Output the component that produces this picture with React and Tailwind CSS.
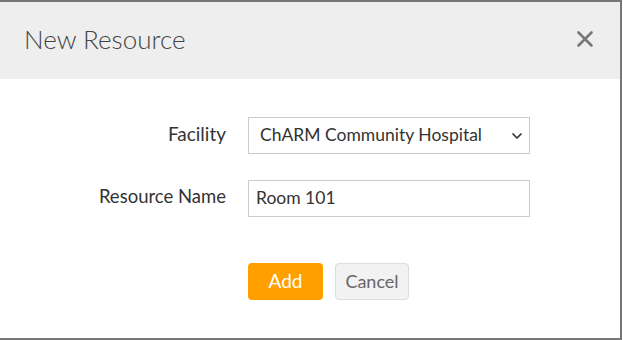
import React from 'react';
import { X, ChevronDown } from 'lucide-react';

export default function App() {
  return (
    <div className="w-[623px] h-[340px] bg-white" style={{ fontFamily: 'Lato, "Noto Sans", sans-serif' }}>
      <div className="w-[622px] h-[340px] border-t-2 border-r-2 border-b-2 border-[#777] flex flex-col">
        {/* Header */}
        <div className="h-[77px] bg-[#eeeeee] flex items-center justify-between pl-6 pr-[22px] pb-[3px]">
          <h2 className="text-[26px] font-light text-[#444]">New Resource</h2>
          <X size={26} strokeWidth={2.4} className="text-[#777]" />
        </div>

        {/* Form */}
        <div className="flex flex-col gap-[26px] pt-[38px]">
          <div className="flex items-center">
            <label className="w-[226px] text-right text-[19px] text-[#333] -mt-[3px]">Facility</label>
            <div className="ml-[22px] relative w-[282px] h-[37px] border border-[#ccc] flex items-center pl-[11px] text-[17.5px] text-[#333]">
              ChARM Community Hospital
              <ChevronDown size={16} strokeWidth={2.6} className="absolute right-[4px] top-[10px] text-[#333]" />
            </div>
          </div>
          <div className="flex items-center">
            <label className="w-[226px] text-right text-[18.5px] text-[#333] -mt-[3px]">Resource Name</label>
            <div className="ml-[22px] w-[282px] h-[37px] border border-[#ccc] flex items-center pl-[7px] text-[17.5px] text-[#333]">
              Room 101
            </div>
          </div>
        </div>

        {/* Buttons */}
        <div className="flex gap-[12px] pl-[248px] pt-[46px]">
          <button className="w-[75px] h-[37px] rounded bg-[#ffa000] text-white text-[19px]">Add</button>
          <button className="w-[74px] h-[37px] rounded border border-[#ddd] bg-[#f2f2f2] text-[#666] text-[18px]">Cancel</button>
        </div>
      </div>
    </div>
  );
}
